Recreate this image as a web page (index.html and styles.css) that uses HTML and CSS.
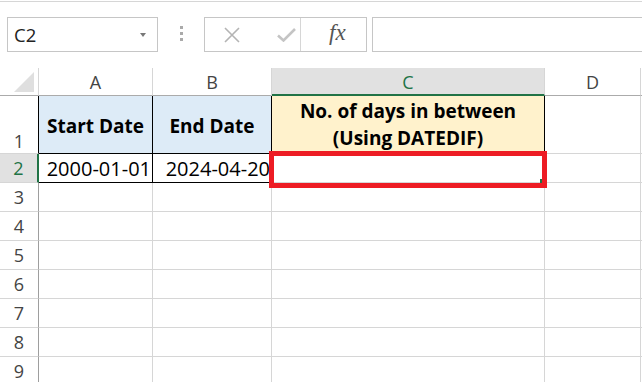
FILE: index.html
```html
<!DOCTYPE html>
<html lang="en">

<head>
    <meta charset="UTF-8">
    <meta name="viewport" content="width=device-width, initial-scale=1.0">
    <title>DATEDIF</title>
    <link rel="stylesheet" href="styles.css">
</head>

<body>
    <div id="toolbar">
        <div id="namebox">
            <span>C2</span>
            <span class="arrow"></span>
        </div>
        <div class="dots"><i></i><i></i><i></i></div>
        <div id="buttons">
            <span class="btn cancel">
                <svg width="16" height="16" viewBox="0 0 16 16"><path d="M1 1 L15 15 M15 1 L1 15" stroke="#b4b4b4" stroke-width="1.6" fill="none"/></svg>
            </span>
            <span class="btn enter">
                <svg width="19" height="14" viewBox="0 0 19 14"><path d="M1 7.5 L6.5 12.5 L18 1" stroke="#c4c4c4" stroke-width="2.6" fill="none"/></svg>
            </span>
            <span class="btn fx">fx</span>
        </div>
        <div id="formula"></div>
    </div>

    <div id="sheet">
        <div class="corner"><span class="tri"></span></div>
        <div class="colhead">A</div>
        <div class="colhead">B</div>
        <div class="colhead active">C</div>
        <div class="colhead">D</div>
        <div class="colhead last"></div>

        <div class="rowhead r1">1</div>
        <div class="cell blue b-all">Start Date</div>
        <div class="cell blue b-all">End Date</div>
        <div class="cell yellow b-all">No. of days in between<br>(Using DATEDIF)</div>
        <div class="cell"></div>
        <div class="cell last"></div>

        <div class="rowhead active">2</div>
        <div class="cell val b-all">2000-01-01</div>
        <div class="cell val b-all">2024-04-20</div>
        <div class="cell"></div>
        <div class="cell"></div>
        <div class="cell last"></div>

        <div class="rowhead">3</div><div class="cell"></div><div class="cell"></div><div class="cell"></div><div class="cell"></div><div class="cell last"></div>
        <div class="rowhead">4</div><div class="cell"></div><div class="cell"></div><div class="cell"></div><div class="cell"></div><div class="cell last"></div>
        <div class="rowhead">5</div><div class="cell"></div><div class="cell"></div><div class="cell"></div><div class="cell"></div><div class="cell last"></div>
        <div class="rowhead">6</div><div class="cell"></div><div class="cell"></div><div class="cell"></div><div class="cell"></div><div class="cell last"></div>
        <div class="rowhead">7</div><div class="cell"></div><div class="cell"></div><div class="cell"></div><div class="cell"></div><div class="cell last"></div>
        <div class="rowhead">8</div><div class="cell"></div><div class="cell"></div><div class="cell"></div><div class="cell"></div><div class="cell last"></div>
        <div class="rowhead">9</div><div class="cell"></div><div class="cell"></div><div class="cell"></div><div class="cell"></div><div class="cell last"></div>

        <div id="handle"></div>
        <div id="highlight"></div>
    </div>
</body>

</html>
```

FILE: styles.css
```css
body {
    margin: 0;
    width: 642px;
    height: 382px;
    overflow: hidden;
    background-color: white;
    font-family: "Open Sans", "Noto Sans", sans-serif;
}

#toolbar {
    display: flex;
    align-items: flex-start;
    border-top: 1px solid rgb(214, 214, 214);
    margin-top: 1px;
    padding-top: 15px;
    box-sizing: border-box;
    height: 67px;
}

#toolbar > div {
    flex-shrink: 0;
}

#namebox {
    display: flex;
    align-items: center;
    justify-content: space-between;
    box-sizing: border-box;
    width: 151px;
    height: 35px;
    margin-left: 7px;
    padding: 0 11px 0 6px;
    border: 1px solid rgb(198, 198, 198);
    font-size: 18.5px;
    color: rgb(34, 34, 34);
}

.arrow {
    width: 0;
    height: 0;
    border-left: 3.5px solid transparent;
    border-right: 3.5px solid transparent;
    border-top: 4px solid rgb(120, 120, 120);
}

.dots {
    display: flex;
    flex-direction: column;
    gap: 3px;
    width: 46px;
    align-items: center;
    padding-top: 9px;
}

.dots i {
    display: block;
    width: 3px;
    height: 3px;
    background-color: rgb(170, 170, 170);
}

#buttons {
    display: flex;
    box-sizing: border-box;
    width: 163px;
    height: 35px;
    border: 1px solid rgb(198, 198, 198);
}

.btn {
    display: flex;
    align-items: center;
    height: 100%;
    box-sizing: border-box;
}

.cancel {
    width: 53px;
    justify-content: center;
}

.enter {
    width: 42px;
    justify-content: flex-end;
    padding-right: 4px;
}

.fx {
    flex: 1;
    border-left: 1px solid rgb(214, 214, 214);
    font-family: "Liberation Serif", serif;
    font-style: italic;
    font-size: 23px;
    color: rgb(85, 85, 85);
    padding-left: 28px;
    padding-bottom: 3px;
}

#formula {
    width: 280px;
    height: 35px;
    margin-left: 5px;
    box-sizing: border-box;
    border: 1px solid rgb(198, 198, 198);
}

#sheet {
    position: relative;
    display: grid;
    grid-template-columns: 39px 114px 119px 273px 96px 1fr;
    grid-template-rows: 28px 58px 29px repeat(7, 29px);
}

#sheet > div {
    box-sizing: border-box;
}

.corner {
    border-right: 1px solid rgb(214, 214, 214);
    border-bottom: 1px solid rgb(171, 171, 171);
    position: relative;
}

.tri {
    position: absolute;
    right: 4px;
    bottom: 3px;
    width: 0;
    height: 0;
    border-left: 20px solid transparent;
    border-bottom: 20px solid rgb(223, 223, 223);
}

.colhead {
    display: flex;
    align-items: center;
    justify-content: center;
    border-right: 1px solid rgb(214, 214, 214);
    border-bottom: 1px solid rgb(171, 171, 171);
    font-size: 18px;
    color: rgb(68, 68, 68);
    padding-top: 1px;
}

.colhead.active {
    background-color: rgb(225, 225, 225);
    border-bottom: 2px solid rgb(33, 115, 70);
    color: rgb(33, 115, 70);
}

.colhead.last,
.cell.last {
    border-right: none;
}

.rowhead {
    display: flex;
    align-items: flex-end;
    justify-content: center;
    border-right: 1px solid rgb(158, 158, 158);
    border-bottom: 1px solid rgb(214, 214, 214);
    font-size: 18px;
    color: rgb(68, 68, 68);
    line-height: 27px;
}

.rowhead.r1 {
    border-right-color: black;
    line-height: 24px;
}

.rowhead.active {
    background-color: rgb(225, 225, 225);
    border-right: 2px solid rgb(33, 115, 70);
    color: rgb(33, 115, 70);
}

.cell {
    display: flex;
    align-items: center;
    justify-content: center;
    text-align: center;
    border-right: 1px solid rgb(214, 214, 214);
    border-bottom: 1px solid rgb(214, 214, 214);
    font-size: 19px;
    color: black;
    white-space: nowrap;
}

.cell.b-all {
    border-right-color: black;
    border-bottom-color: black;
}

.blue {
    background-color: rgb(221, 235, 247);
    font-weight: bold;
    padding-top: 2px;
}

.yellow {
    background-color: rgb(255, 242, 204);
    font-weight: bold;
    line-height: 27px;
    align-items: flex-start;
    padding-top: 2px;
}

.val {
    justify-content: flex-end;
    font-size: 20px;
    padding-top: 1px;
    padding-right: 1px;
    overflow: hidden;
}

#handle {
    position: absolute;
    left: 540px;
    top: 111px;
    width: 3px;
    height: 4px;
    background-color: rgb(33, 115, 70);
}

#highlight {
    position: absolute;
    left: 269px;
    top: 83px;
    width: 278px;
    height: 37px;
    border: 5px solid rgb(237, 28, 36);
}
```
